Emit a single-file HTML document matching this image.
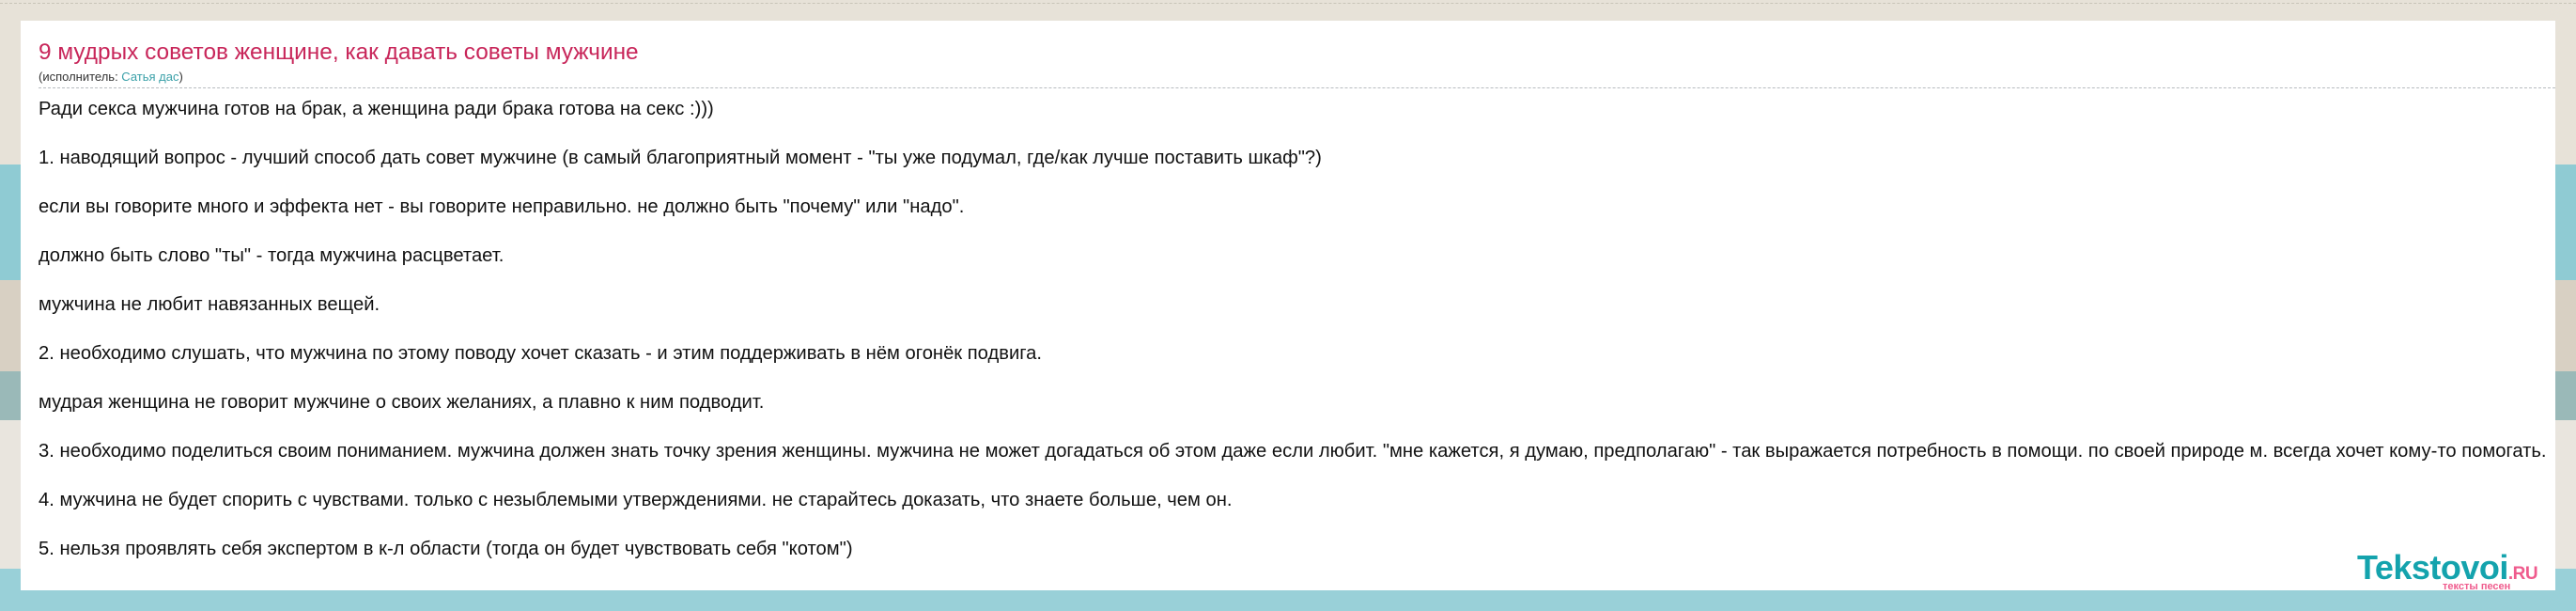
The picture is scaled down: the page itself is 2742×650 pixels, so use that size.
<!DOCTYPE html>
<html><head><meta charset="utf-8"><style>
html,body{margin:0;padding:0;width:2742px;height:650px;overflow:hidden}
body{position:relative;background:#e7e2d8;font-family:"Liberation Sans",Arial,sans-serif}
.band{position:absolute;left:0;width:2742px}
.panel{position:absolute;left:22px;top:22px;width:2698px;height:606px;background:#fff;overflow:hidden}
.title{position:absolute;left:19px;top:20px;font-size:24.4px;color:#c8265a;white-space:nowrap}
.sub{position:absolute;left:19px;top:52px;font-size:13px;color:#333;white-space:nowrap}
.sub span{color:#3aa0a8}
.dash{position:absolute;left:19px;right:0;top:71px;border-top:1px dashed #b8bcc0}
.l{position:absolute;left:19px;font-size:20.2px;color:#111;white-space:nowrap}
.logo{position:absolute;left:2509px;top:583px;font-size:36px;font-weight:bold;color:#14a3ad;letter-spacing:-0.5px}
.logo b{font-size:19px;color:#ef5b8d}
.tag{position:absolute;left:2600px;top:618px;font-size:11px;font-weight:bold;color:#ef5b8d}
</style></head><body>
<div class="band" style="top:0;height:3px;border-bottom:1px dashed #c8c4b8"></div>
<div class="band" style="top:175px;height:123px;background:#8fcbd3"></div>
<div class="band" style="top:298px;height:97px;background:#d8d0c3"></div>
<div class="band" style="top:395px;height:52px;background:#9ab9b8"></div>
<div class="band" style="top:447px;height:158px;background:#e9e5de"></div>
<div class="band" style="top:605px;height:45px;background:#99d0d8"></div>
<div class="panel">
<div class="title">9 мудрых советов женщине, как давать советы мужчине</div>
<div class="sub">(исполнитель: <span>Сатья дас</span>)</div>
<div class="dash"></div>
<div class="l" style="top:83px">Ради секса мужчина готов на брак, а женщина ради брака готова на секс :)))</div>
<div class="l" style="top:135px">1. наводящий вопрос - лучший способ дать совет мужчине (в самый благоприятный момент - "ты уже подумал, где/как лучше поставить шкаф"?)</div>
<div class="l" style="top:187px">если вы говорите много и эффекта нет - вы говорите неправильно. не должно быть "почему" или "надо".</div>
<div class="l" style="top:239px">должно быть слово "ты" - тогда мужчина расцветает.</div>
<div class="l" style="top:291px">мужчина не любит навязанных вещей.</div>
<div class="l" style="top:343px">2. необходимо слушать, что мужчина по этому поводу хочет сказать - и этим поддерживать в нём огонёк подвига.</div>
<div class="l" style="top:395px">мудрая женщина не говорит мужчине о своих желаниях, а плавно к ним подводит.</div>
<div class="l" style="top:447px">3. необходимо поделиться своим пониманием. мужчина должен знать точку зрения женщины. мужчина не может догадаться об этом даже если любит. "мне кажется, я думаю, предполагаю" - так выражается потребность в помощи. по своей природе м. всегда хочет кому-то помогать.</div>
<div class="l" style="top:499px">4. мужчина не будет спорить с чувствами. только с незыблемыми утверждениями. не старайтесь доказать, что знаете больше, чем он.</div>
<div class="l" style="top:551px">5. нельзя проявлять себя экспертом в к-л области (тогда он будет чувствовать себя "котом")</div>
</div>
<div class="logo">Tekstovoi<b>.RU</b></div>
<div class="tag">тексты песен</div>
</body></html>
